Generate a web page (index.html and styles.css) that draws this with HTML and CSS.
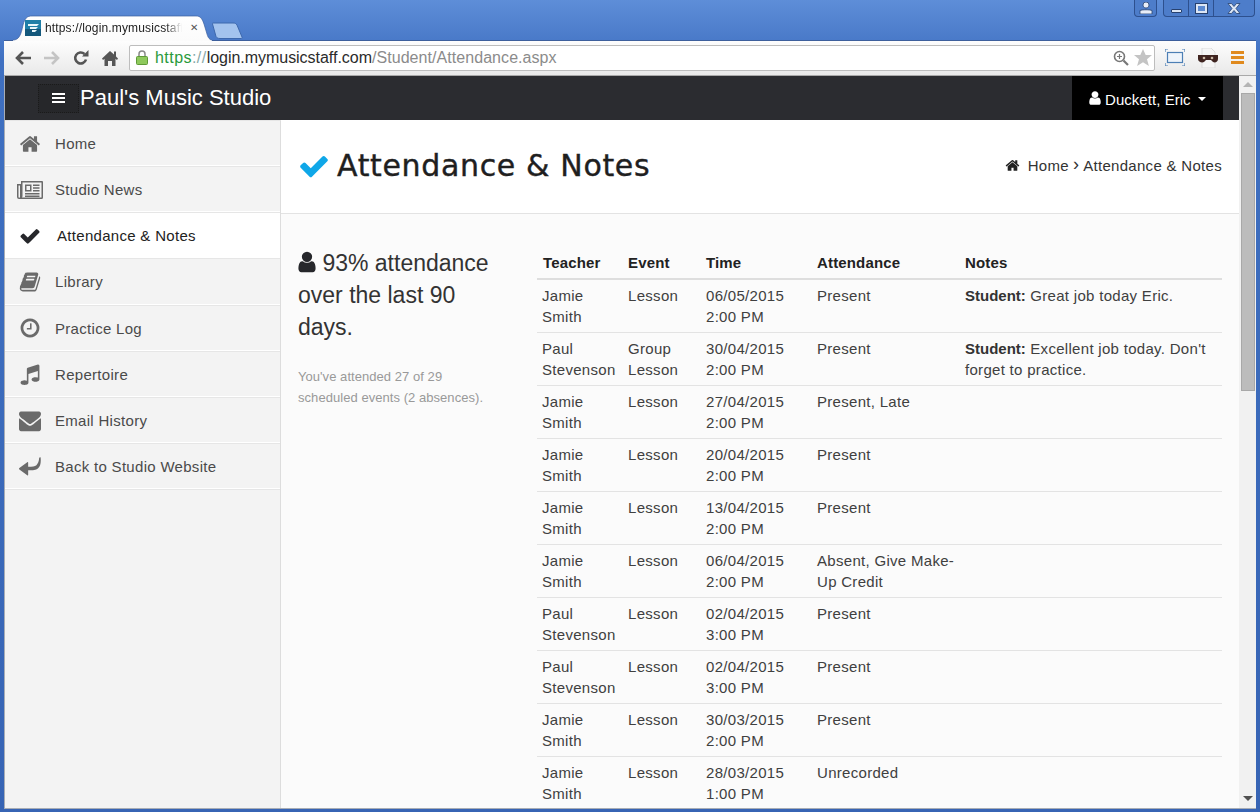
FILE: index.html
```html
<!DOCTYPE html>
<html lang="en">
<head>
<meta charset="utf-8">
<title>Attendance &amp; Notes</title>
<link rel="stylesheet" href="styles.css">
</head>
<body>
<svg class="sprite" width="0" height="0" aria-hidden="true">
  <symbol id="i-check" viewBox="0 0 1792 1792"><path d="M1671 566q0 40-28 68l-724 724-136 136q-28 28-68 28t-68-28l-136-136-362-362q-28-28-28-68t28-68l136-136q28-28 68-28t68 28l294 295 656-657q28-28 68-28t68 28l136 136q28 28 28 68z"/></symbol>
  <symbol id="i-user" viewBox="0 0 1792 1792"><path d="M1536 1399q0 109-62.5 187t-150.5 78h-854q-88 0-150.5-78t-62.5-187q0-85 8.5-160.5t31.5-152 58.5-131 94-89 134.5-34.5q131 128 313 128t313-128q76 0 134.5 34.5t94 89 58.5 131 31.5 152 8.5 160.5zm-256-887q0 159-112.5 271.5t-271.5 112.5-271.5-112.5-112.5-271.5 112.5-271.5 271.5-112.5 271.5 112.5 112.5 271.5z"/></symbol>
  <symbol id="i-home" viewBox="0 0 1792 1792"><path d="M1472 992v480q0 26-19 45t-45 19h-384v-384h-256v384h-384q-26 0-45-19t-19-45v-480q0-1 .5-3t.5-3l575-474 575 474q1 2 1 6zm223-69l-62 74q-8 9-21 11h-3q-13 0-21-7l-692-577-692 577q-12 8-24 7-13-2-21-11l-62-74q-8-10-7-23.5t11-21.5l719-599q32-26 76-26t76 26l244 204v-195q0-14 9-23t23-9h192q14 0 23 9t9 23v408l219 182q10 8 11 21.5t-7 23.5z"/></symbol>
  <symbol id="i-mail" viewBox="0 0 1792 1792" preserveAspectRatio="none"><path d="M1792 710v794q0 66-47 113t-113 47h-1472q-66 0-113-47t-47-113v-794q44 49 101 87 362 246 497 345 57 42 92.5 65.5t94.5 48 110 24.5h2q51 0 110-24.5t94.5-48 92.5-65.5q170-123 498-345 57-39 100-87zm0-294q0 79-49 151t-122 123q-376 261-468 325-10 7-42.5 30.5t-54 38-52 32.5-57.5 27-50 9h-2q-23 0-50-9t-57.5-27-52-32.5-54-38-42.5-30.5q-91-64-262-182.5t-205-142.5q-62-42-117-115.5t-55-136.5q0-78 41.5-130t118.5-52h1472q65 0 112.5 47t47.5 113z"/></symbol>
  <symbol id="i-music" viewBox="0 0 1792 1792"><path d="M1664 224v1120q0 50-34 89t-86 60.5-103.5 32-96.5 10.5-96.5-10.5-103.5-32-86-60.5-34-89 34-89 86-60.5 103.5-32 96.5-10.5q105 0 192 39v-537l-768 237v709q0 50-34 89t-86 60.5-103.5 32-96.5 10.5-96.5-10.5-103.5-32-86-60.5-34-89 34-89 86-60.5 103.5-32 96.5-10.5q105 0 192 39v-967q0-31 19-56.5t49-35.5l832-256q12-4 28-4 40 0 68 28t28 68z"/></symbol>
  <symbol id="i-clock" viewBox="0 0 1792 1792"><path d="M1024 544v448q0 14-9 23t-23 9h-320q-14 0-23-9t-9-23v-64q0-14 9-23t23-9h224v-352q0-14 9-23t23-9h64q14 0 23 9t9 23zm416 352q0-148-73-273t-198-198-273-73-273 73-198 198-73 273 73 273 198 198 273 73 273-73 198-198 73-273zm224 0q0 209-103 385.5t-279.5 279.5-385.5 103-385.5-103-279.5-279.5-103-385.5 103-385.5 279.5-279.5 385.5-103 385.5 103 279.5 279.5 103 385.5z"/></symbol>
  <symbol id="i-book" viewBox="0 0 1792 1792"><path d="M1703 478q40 57 18 129l-275 906q-19 64-76.5 107.5t-122.5 43.5h-923q-77 0-148.5-53.5t-99.5-131.5q-24-67-2-127 0-4 3-27t4-37q1-8-3-21.5t-3-19.5q2-11 8-21t16.5-23.5 16.5-23.5q23-38 45-91.5t30-91.5q3-10 .5-30t-.5-28q3-11 17-28t17-23q21-36 42-92t25-90q1-9-2.5-32t.5-28q4-13 22-30.5t22-22.5q19-26 42.5-84.5t27.5-96.5q1-8-3-25.5t-2-26.5q2-8 9-18t18-23 17-21q8-12 16.5-30.5t15-35 16-36 19.5-32 26.5-23.5 36-11.5 47.5 5.5l-1 3q38-9 51-9h761q74 0 114 56t18 130l-274 906q-36 119-71.5 153.5t-128.5 34.5h-869q-27 0-38 15-11 16-1 43 24 70 144 70h923q29 0 56-15.5t35-41.5l300-987q7-22 5-57 38 15 59 43zm-1064 2q-4 13 2 22.5t20 9.5h608q13 0 25.5-9.5t16.5-22.5l21-64q4-13-2-22.5t-20-9.5h-608q-13 0-25.5 9.5t-16.5 22.5zm-83 256q-4 13 2 22.5t20 9.5h608q13 0 25.5-9.5t16.5-22.5l21-64q4-13-2-22.5t-20-9.5h-608q-13 0-25.5 9.5t-16.5 22.5z"/></symbol>
  <symbol id="i-back" viewBox="0 0 24 22"><path d="M23.6 1c.5 5-.2 9.400-3 11.600-2.200 1.700-5 2-10.600 2v4.900c0 .7-.5.9-1 .5L.4 13.600c-.5-.4-.5-1 0-1.400L9 5.800c.5-.4 1-.2 1 .5v4.300c4.500 0 7.300-.1 9-1.600C20.700 7.500 21.800 4.600 22 1.300c.1-.9 1.500-1.200 1.600-.3z"/></symbol>
  <symbol id="i-news" viewBox="0 0 26 18"><path fill-rule="evenodd" d="M4 0h21a1 1 0 0 1 1 1v15.500a1.500 1.500 0 0 1-1.500 1.500H2a2 2 0 0 1-2-2V3h4zM5.500 1.500V15c0 .6-.2 1.100-.5 1.500h19.500v-15zM1.500 4.500V16a.7.7 0 0 0 1.500 0V4.500z"/><path fill-rule="evenodd" d="M8 3.500h6.500v7H8zM9.500 5v4H13V5z"/><path d="M16 3.500h6.500V5H16zM16 6.300h6.500v1.400H16zM16 9h6.500v1.500H16zM8 12h14.500v1.400H8zM8 14.500h14.500v1.400H8z"/></symbol>
</svg>

<div class="window">
  <header class="tabstrip">
    <div class="tab">
      <svg class="tab-shape" viewBox="0 0 199 26" width="199" height="26" preserveAspectRatio="none"><defs><linearGradient id="tabfill" x1="0" y1="0" x2="0" y2="1"><stop offset="0" stop-color="#fff"/><stop offset="1" stop-color="#fbfbfb"/></linearGradient></defs><path d="M0 26V25C6 25 8 20 10 10 12 3 14 1 19 1H183c4 0 6 2 8 8l3 10c1 4 3 6 5 6v1z" fill="url(#tabfill)"/><path d="M0 25C6 25 8 20 10 10 12 3 14 1 19 1H183c4 0 6 2 8 8l3 10c1 4 3 6 5 6" fill="none" stroke="#3b5f9e" stroke-width=".7"/></svg>
      <svg class="favicon" viewBox="0 0 16 16" width="16" height="16"><rect width="16" height="16" fill="#1f7fa8"/><rect y="9" width="16" height="7" fill="#14587c"/><path d="M3 4h11l-2 2H3zM5 7h8l-2 2H5zM7 10h5l-2 2H7z" fill="#e8f6fb"/></svg>
      <span class="tab-title">https://login.mymusicstaff</span>
      <span class="tab-close">✕</span>
    </div>
    <svg class="newtab" viewBox="0 0 32 17" width="32" height="17"><path d="M1 1h20c2 0 3 .5 4 2l5 12c.4 1 0 1.500-1 1.500H8c-2 0-3-.5-4-2L.5 2C.2 1.500.4 1 1 1z" fill="#a3c3ee" stroke="#3d68ad"/></svg>
    <div class="wincontrols">
      <div class="wc wc-user"><svg viewBox="0 0 14 12" width="14" height="12"><path d="M7 0a3 3 0 0 1 3 3c0 1.600-1 3-3 3S4 4.600 4 3a3 3 0 0 1 3-3zM1 8.500C3 7.500 11 7.500 13 8.500V12H1z" fill="#e8eef8" stroke="#27416f" stroke-width=".8"/></svg></div>
      <div class="wc-group">
        <div class="wc wc-min"><span class="min-bar"></span></div>
        <div class="wc wc-max"><span class="max-box"></span></div>
        <div class="wc wc-close"><svg viewBox="0 0 14 11" width="14" height="11"><path d="M1 .5h3.500L7 3.500 9.500.5H13L9 5.500l4 5H9.500L7 7.500 4.500 10.500H1l4-5z" fill="#dce6f5" stroke="#27416f" stroke-width=".8"/></svg></div>
      </div>
    </div>
  </header>

  <nav class="toolbar">
    <svg class="tb-icon" viewBox="0 0 16 14" width="16" height="14"><path d="M8 1 2 7l6 6M2.500 7H16" fill="none" stroke="#555" stroke-width="2.600"/></svg>
    <svg class="tb-icon" viewBox="0 0 16 14" width="16" height="14"><path d="M8 1l6 6-6 6M13.500 7H0" fill="none" stroke="#c4c4c4" stroke-width="2.600"/></svg>
    <svg class="tb-icon" viewBox="0 0 16 16" width="16" height="16"><path d="M13 9.500A5.500 5.500 0 1 1 11.500 4" fill="none" stroke="#555" stroke-width="2.600"/><path d="M9 6.500h6.500V0z" fill="#555"/></svg>
    <svg class="tb-icon" viewBox="0 0 16 16" width="16" height="16"><path d="M8 1 0 8.500 1 10l1.500-1.300V16H6v-5h4v5h3.500V8.700L15 10l1-1.500-2-2V1.500h-2V4.600z" fill="#555"/></svg>
    <div class="omnibox">
      <svg class="lock" viewBox="0 0 12 15" width="12" height="15"><path d="M3 7V4a3 3 0 0 1 6 0v3" fill="none" stroke="#8a8a8a" stroke-width="1.500"/><rect x=".5" y="6.500" width="11" height="8" rx="1" fill="#8ec95c" stroke="#5f9a38"/></svg>
      <span class="url"><span class="u-https">https</span><span class="u-sep">://</span><span class="u-host">login.mymusicstaff.com</span><span class="u-path">/Student/Attendance.aspx</span></span>
      <svg class="zoom-ic" viewBox="0 0 16 16" width="16" height="16"><circle cx="6.500" cy="6.500" r="5" fill="none" stroke="#777" stroke-width="1.600"/><path d="M4 6.500h5M6.500 4v5" stroke="#777" stroke-width="1.200"/><path d="m10.500 10.500 4.500 4.500" stroke="#777" stroke-width="2.200"/></svg>
      <svg class="star" viewBox="0 0 18 17" width="18" height="17"><path d="m9 0 2.700 6h6.300l-5 4.200 1.900 6.800L9 13.300 3.100 17 5 10.200 0 6h6.300z" fill="#c4c4c4"/></svg>
    </div>
    <svg class="ext-cast" viewBox="0 0 20 17" width="20" height="17"><rect x="2.500" y="3.500" width="15" height="10" fill="#eef4fb" stroke="#4c7fb5" stroke-width="1.200"/><path d="M0 3V0h3M17 0h3v3M20 14v3h-3M3 17H0v-3" fill="none" stroke="#4c7fb5" stroke-width="1.200"/></svg>
    <svg class="ext-mask" viewBox="0 0 20 20" width="20" height="20"><path d="M4 0h9l4 4v16H4z" fill="#f5f5f5" stroke="#ddd"/><path d="M0 7h20v4c0 3-3 4-5 3l-2-2H8l-2 2c-2 1-6 0-6-3z" fill="#3f2420"/><circle cx="6" cy="10" r="1.300" fill="#c9b9a6"/><circle cx="14" cy="10" r="1.300" fill="#c9b9a6"/></svg>
    <div class="menu-ic"><span></span><span></span><span></span></div>
  </nav>

  <div class="viewport">
    <div class="page">
      <div class="navbar">
        <div class="toggle"><span></span><span></span><span></span></div>
        <div class="brand">Paul's Music Studio</div>
        <div class="account"><svg class="ic-acc"><use href="#i-user"/></svg><span>Duckett, Eric</span><span class="caret"></span></div>
      </div>
      <div class="main">
        <aside class="sidebar">
          <a class="nav-item"><svg class="nav-ic"><use href="#i-home"/></svg>Home</a>
          <a class="nav-item"><svg class="nav-ic nav-news"><use href="#i-news"/></svg>Studio News</a>
          <a class="nav-item active"><svg class="nav-ic"><use href="#i-check"/></svg>Attendance &amp; Notes</a>
          <a class="nav-item"><svg class="nav-ic"><use href="#i-book"/></svg>Library</a>
          <a class="nav-item"><svg class="nav-ic"><use href="#i-clock"/></svg>Practice Log</a>
          <a class="nav-item"><svg class="nav-ic"><use href="#i-music"/></svg>Repertoire</a>
          <a class="nav-item"><svg class="nav-ic nav-mail"><use href="#i-mail"/></svg>Email History</a>
          <a class="nav-item"><svg class="nav-ic"><use href="#i-back"/></svg>Back to Studio Website</a>
        </aside>
        <main class="content">
          <div class="page-head">
            <h1><svg class="h1-ic"><use href="#i-check"/></svg>Attendance &amp; Notes</h1>
            <div class="crumbs"><svg class="crumb-ic"><use href="#i-home"/></svg><span>Home</span><span class="crumb-sep">›</span><span>Attendance &amp; Notes</span></div>
          </div>
          <div class="body-row">
            <section class="summary">
              <p class="stat"><svg class="stat-ic"><use href="#i-user"/></svg> 93% attendance over the last 90 days.</p>
              <p class="stat-note">You've attended 27 of 29 scheduled events (2 absences).</p>
            </section>
            <table class="att">
              <colgroup><col class="c1"><col class="c2"><col class="c3"><col class="c4"><col class="c5"></colgroup>
              <thead><tr><th>Teacher</th><th>Event</th><th>Time</th><th>Attendance</th><th>Notes</th></tr></thead>
              <tbody>
                <tr><td>Jamie<br>Smith</td><td>Lesson</td><td>06/05/2015<br>2:00 PM</td><td>Present</td><td><b>Student:</b> Great job today Eric.</td></tr>
                <tr><td>Paul<br>Stevenson</td><td>Group<br>Lesson</td><td>30/04/2015<br>2:00 PM</td><td>Present</td><td><b>Student:</b> Excellent job today. Don't forget to practice.</td></tr>
                <tr><td>Jamie<br>Smith</td><td>Lesson</td><td>27/04/2015<br>2:00 PM</td><td>Present, Late</td><td></td></tr>
                <tr><td>Jamie<br>Smith</td><td>Lesson</td><td>20/04/2015<br>2:00 PM</td><td>Present</td><td></td></tr>
                <tr><td>Jamie<br>Smith</td><td>Lesson</td><td>13/04/2015<br>2:00 PM</td><td>Present</td><td></td></tr>
                <tr><td>Jamie<br>Smith</td><td>Lesson</td><td>06/04/2015<br>2:00 PM</td><td>Absent, Give Make-Up Credit</td><td></td></tr>
                <tr><td>Paul<br>Stevenson</td><td>Lesson</td><td>02/04/2015<br>3:00 PM</td><td>Present</td><td></td></tr>
                <tr><td>Paul<br>Stevenson</td><td>Lesson</td><td>02/04/2015<br>3:00 PM</td><td>Present</td><td></td></tr>
                <tr><td>Jamie<br>Smith</td><td>Lesson</td><td>30/03/2015<br>2:00 PM</td><td>Present</td><td></td></tr>
                <tr><td>Jamie<br>Smith</td><td>Lesson</td><td>28/03/2015<br>1:00 PM</td><td>Unrecorded</td><td></td></tr>
              </tbody>
            </table>
          </div>
        </main>
      </div>
    </div>
    <div class="scrollbar">
      <span class="sb-up"></span>
      <span class="sb-thumb"></span>
      <span class="sb-down"></span>
    </div>
  </div>
</div>
</body>
</html>
```
FILE: styles.css
```css
* { box-sizing: border-box; }
html, body { margin: 0; height: 100%; overflow: hidden; }
body { font-family: "Liberation Sans", Arial, sans-serif; color: #333; }
.sprite { display: block; height: 0; }
svg { fill: currentColor; flex: none; }

.window {
  width: 1260px; height: 812px;
  display: flex; flex-direction: column;
  padding: 0 4px 3px 4px;
  background: linear-gradient(#5e8ed8 0, #3f70c1 60px, #3764b4 100%);
}

/* tab strip */
.tabstrip { height: 40px; display: flex; align-items: flex-end; padding-left: 9px; position: relative; flex: none; }
.tab { width: 199px; height: 25px; position: relative; display: flex; align-items: center; padding: 0 0 0 12px; }
.tab-shape { position: absolute; left: 0; top: 0; }
.favicon { position: relative; }
.tab-title { position: relative; width: 137px; overflow: hidden; white-space: nowrap; font-size: 12px; margin-left: 4px; color: #222; letter-spacing: .15px; -webkit-mask-image: linear-gradient(to right, #000 88%, transparent); mask-image: linear-gradient(to right, #000 88%, transparent); }
.tab-close { position: relative; font-size: 10px; color: #555; margin-left: 8px; font-family: "DejaVu Sans", sans-serif; font-weight: bold; }
.newtab { margin: 0 0 1px 0; }
.wincontrols { position: absolute; right: 1px; top: 0; display: flex; gap: 6px; }
.wc-group { display: flex; border: 1px solid #2d508e; border-top: 0; border-radius: 0 0 4px 4px; background: #4d7dca; }
.wc { height: 16px; display: flex; align-items: center; justify-content: center; }
.wc-user { width: 23px; border: 1px solid #2d508e; border-top: 0; border-radius: 0 0 4px 4px; background: #4d7dca; height: 17px; }
.wc-min { width: 25px; border-right: 1px solid #2d508e; }
.wc-max { width: 25px; border-right: 1px solid #2d508e; }
.wc-close { width: 40px; }
.min-bar { width: 11px; height: 4px; margin-top: 6px; background: #dce6f5; border: 1px solid #27416f; border-radius: 1px; }
.max-box { width: 11px; height: 9px; background: #5d8bd2; border: 2px solid #dce6f5; outline: 1px solid #27416f; }

/* toolbar */
.toolbar { height: 36px; flex: none; display: flex; align-items: center; padding: 0 12px 1px 11px; gap: 13px; background: linear-gradient(#fdfdfd, #e9e9e9); border-bottom: 1px solid #a9a9a9; border-top: 1px solid #3d5f9c; }
.omnibox { flex: 1; min-width: 0; height: 26px; margin-left: -2px; margin-right: -5px; display: flex; align-items: center; background: #fff; border: 1px solid #bdbdbd; border-radius: 2px; padding: 0 2px 0 6px; }
.lock { margin-right: 7px; }
.url { flex: 1; font-size: 16px; white-space: nowrap; }
.u-https { color: #2a9a3c; letter-spacing: .45px; }
.u-sep { color: #8aa; letter-spacing: .45px; }
.u-host { color: #2b2b2b; letter-spacing: -.03px; }
.u-path { color: #8b8b8b; letter-spacing: .06px; }
.zoom-ic { margin-right: 5px; }
.ext-cast { margin-left: 2px; }
.menu-ic { width: 13px; display: flex; flex-direction: column; gap: 2px; }
.menu-ic span { height: 3px; background: #e08a1e; }

/* viewport */
.viewport { flex: 1; min-height: 0; display: flex; background: #fff; border-left: 1px solid #a8adb5; border-bottom: 1px solid #a8adb5; }
.page { flex: 1; min-width: 0; display: flex; flex-direction: column; overflow: hidden; }
.scrollbar { width: 17px; flex: none; background: #f1f1f1; display: flex; flex-direction: column; align-items: center; padding: 6px 0 7px; }
.sb-up, .sb-down { width: 0; height: 0; border-left: 5px solid transparent; border-right: 5px solid transparent; }
.sb-up { border-bottom: 5px solid #b4b4b4; }
.sb-down { border-top: 5px solid #505050; }
.sb-thumb { width: 14px; height: 298px; margin: 6px 0 auto; background: #bcbcbc; border: 1px solid #a8a8a8; }

/* navbar */
.navbar { height: 44px; flex: none; display: flex; align-items: center; background: #2b2c30; color: #fff; padding-left: 33px; padding-right: 16px; }
.toggle { width: 41px; height: 29px; display: flex; flex-direction: column; align-items: center; justify-content: center; gap: 2px; background: #26272a; border: 1px dotted #1a1a1a; }
.toggle span { width: 13px; height: 2px; background: #fff; }
.brand { font-size: 22px; margin-left: 1px; }
.account { margin-left: auto; width: 151px; height: 44px; background: #000; display: flex; align-items: center; padding: 2px 0 0 15px; font-size: 15px; letter-spacing: .05px; }
.ic-acc { width: 16px; height: 16px; margin-right: 2px; margin-top: -3px; }
.caret { width: 0; height: 0; margin-left: 7px; border-left: 4px solid transparent; border-right: 4px solid transparent; border-top: 4px solid #fff; }

/* main */
.main { flex: 1; min-height: 0; display: flex; }
.sidebar { width: 276px; flex: none; background: #f3f3f3; border-right: 1px solid #ddd; border-top: 1px solid #e6e6e6; font-size: 15px; letter-spacing: .3px; color: #4a4a4a; }
.nav-item { display: flex; align-items: center; height: 46.15px; padding-left: 12px; border-bottom: 1px solid #e6e6e6; box-shadow: inset 0 -1px 0 #fff; white-space: nowrap; }
.nav-item.active { background: #fff; color: #222; box-shadow: none; }
.nav-ic { width: 22px; height: 22px; margin: 0 14px 0 2px; color: #6a6a6a; }
.nav-item.active .nav-ic { color: #26272b; margin-right: 16px; }
.nav-news { width: 26px; height: 18px; margin: 0 12px 0 0; }
.nav-mail { height: 25px; }

.content { flex: 1; min-width: 0; background: #fbfbfb; overflow: hidden; }
.page-head { height: 94px; background: #fff; border-bottom: 1px solid #e3e3e3; display: flex; align-items: center; justify-content: space-between; padding: 0 17px 2px 18px; }
h1 { margin: 0; display: flex; align-items: center; font-family: "DejaVu Sans", sans-serif; font-weight: 400; font-size: 30px; color: #1f1f1f; letter-spacing: .65px; -webkit-text-stroke: .4px #1f1f1f; }
.h1-ic { width: 32px; height: 32px; color: #0fa7e8; margin: 0 7px 0 -1px; }
.crumbs { display: flex; align-items: center; font-size: 15px; letter-spacing: .3px; color: #333; gap: 4px; }
.crumb-ic { width: 15px; height: 15px; color: #222; margin-right: 4px; }
.crumb-sep { font-size: 18px; line-height: 15px; margin-top: -2px; }

.body-row { display: flex; align-items: flex-start; padding: 34px 17px 0 17px; gap: 39px; }
.summary { width: 200px; flex: none; }
.stat { margin: -1px 0 0; font-size: 23px; line-height: 32px; color: #333; }
.stat-ic { width: 24px; height: 24px; margin: 0 -3px 0 -3px; vertical-align: -3px; color: #26272b; }
.stat-note { margin: 23px 0 0; font-size: 13px; line-height: 21px; color: #999; letter-spacing: .05px; }

.att { flex: 1; border-collapse: collapse; table-layout: fixed; font-size: 15px; line-height: 21px; letter-spacing: .3px; color: #404040; }
.c1 { width: 85px; } .c2 { width: 78px; } .c3 { width: 111px; } .c4 { width: 148px; }
.att th { text-align: left; padding: 4px 6px 5px 6px; border-bottom: 2px solid #dedede; color: #222; letter-spacing: .15px; }
.att td { vertical-align: top; padding: 5px 5px 5px 5px; border-bottom: 1px solid #e3e3e3; }
.att td:nth-child(n+2) { padding-left: 6px; }
.att td:nth-child(4) { padding-right: 0; }
.att b { color: #333; letter-spacing: 0; }
```
